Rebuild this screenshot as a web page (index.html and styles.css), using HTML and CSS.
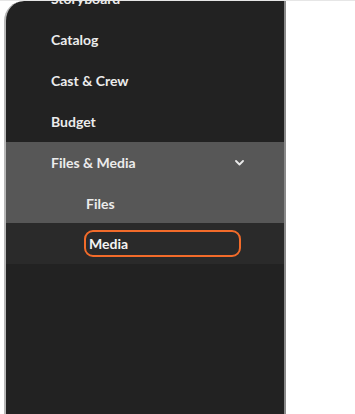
FILE: index.html
```html
<!DOCTYPE html>
<html lang="en">
<head>
    <meta charset="UTF-8">
    <meta name="viewport" content="width=device-width, initial-scale=1.0">
    <title>Sidebar</title>
    <link rel="stylesheet" href="styles.css">
</head>
<body>
    <div class="page">
        <aside class="sidebar">
            <ul class="menu">
                <li class="item">Storyboard</li>
                <li class="item">Catalog</li>
                <li class="item">Cast &amp; Crew</li>
                <li class="item">Budget</li>
                <li class="group">
                    <div class="item open">
                        <span>Files &amp; Media</span>
                        <svg class="chevron" width="9" height="6" viewBox="0 0 9 6">
                            <path d="M1 1 L4.5 4.5 L8 1" fill="none" stroke="#eaeaea" stroke-width="1.8" stroke-linecap="round" stroke-linejoin="round"/>
                        </svg>
                    </div>
                    <div class="item sub">Files</div>
                </li>
                <li class="item sub-row">
                    <span class="focus">Media</span>
                </li>
            </ul>
        </aside>
    </div>
</body>
</html>
```

FILE: styles.css
```css
body, html {
    margin: 0;
    padding: 0;
    height: 100%;
    background-color: #fff;
    font-family: Lato, "Open Sans", sans-serif;
}

.page {
    height: 100%;
    border-top: 1px solid #e6e6e6;
    box-sizing: border-box;
    padding-left: 4px;
}

.sidebar {
    width: 282px;
    height: 100%;
    background-color: #222;
    border-left: 2px solid #b8b8b8;
    border-right: 2px solid #8a8a8a;
    border-top-left-radius: 20px;
    overflow: hidden;
    box-sizing: border-box;
}

.menu {
    list-style: none;
    margin: -23px 0 0 0;
    padding: 0;
}

.item {
    height: 41px;
    display: flex;
    align-items: center;
    padding-left: 45px;
    padding-right: 40px;
    color: #ececec;
    font-size: 14px;
    font-weight: bold;
}

.group {
    background-color: #575757;
}

.open {
    justify-content: space-between;
}

.sub {
    padding-left: 80px;
    height: 40px;
}

.sub-row {
    background-color: #2a2a2a;
    padding-left: 78px;
    padding-right: 0;
}

.focus {
    width: 157px;
    height: 27px;
    display: flex;
    align-items: center;
    padding: 0 3px;
    border: 2px solid #f26b2a;
    border-radius: 9px;
    box-sizing: border-box;
    color: #f4f4f4;
}
```
